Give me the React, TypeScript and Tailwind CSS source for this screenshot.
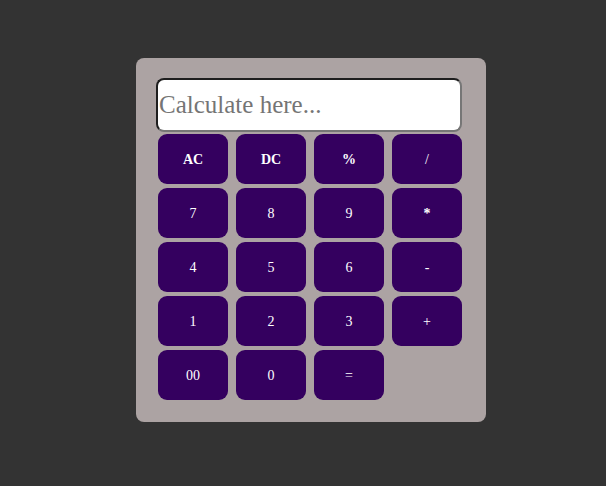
import React from 'react';

const keys = ['AC', 'DC', '%', '/', '7', '8', '9', '*', '4', '5', '6', '-', '1', '2', '3', '+', '00', '0', '='];
const boldKeys = ['AC', 'DC', '%', '*'];

export default function App() {
  return (
    <div className="min-h-[486px] w-full bg-[#333333] pl-[136px] pt-[58px]" style={{ fontFamily: '"Liberation Serif", serif' }}>
      <div className="w-[350px] h-[364px] rounded-lg bg-[#aca3a3] pt-[20px] pl-[20px]">
        <input
          type="text"
          placeholder="Calculate here..."
          className="block w-[306px] h-[54px] rounded-lg border-2 border-t-[#1e1e1e] border-l-[#1e1e1e] border-b-[#767676] border-r-[#767676] bg-white px-[1px] text-[25px] text-black placeholder:text-[#757575] outline-none"
        />
        <div className="mt-[2px] ml-[2px] grid grid-cols-[repeat(4,70px)] gap-x-[8px] gap-y-[4px]">
          {keys.map((k) => (
            <button
              key={k}
              className={
                boldKeys.includes(k)
                  ? 'h-[50px] w-[70px] rounded-[9px] bg-[#34005f] text-[14px] font-bold text-white'
                  : 'h-[50px] w-[70px] rounded-[9px] bg-[#34005f] text-[14px] text-white'
              }
            >
              {k}
            </button>
          ))}
        </div>
      </div>
    </div>
  );
}
